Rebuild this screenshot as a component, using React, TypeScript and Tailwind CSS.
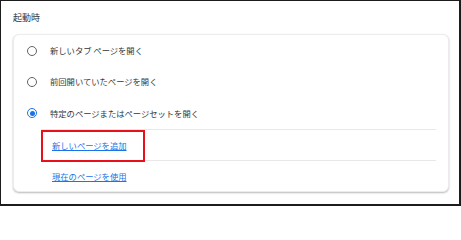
import React from "react";

const font = { fontFamily: '"Noto Sans CJK JP", "Noto Sans", sans-serif' };

function Radio({ checked }: { checked?: boolean }) {
  return checked ? (
    <span className="flex h-[10px] w-[10px] shrink-0 items-center justify-center rounded-full border-[1.6px] border-[#1a73e8]">
      <span className="h-[5px] w-[5px] rounded-full bg-[#1a73e8]" />
    </span>
  ) : (
    <span className="h-[10px] w-[10px] shrink-0 rounded-full border-[1.6px] border-[#5f6368]" />
  );
}

function Row({ label, checked, h }: { label: string; checked?: boolean; h: string }) {
  return (
    <div className={`flex items-center pl-[13px] ${h}`}>
      <Radio checked={checked} />
      <span className="ml-[13px] text-[8.3px] leading-none text-[#333639]">{label}</span>
    </div>
  );
}

export default function App() {
  return (
    <div
      className="h-[206px] w-[461px] border-b-2 border-l border-r-2 border-t border-[#1c1c1c] bg-white"
      style={font}
    >
      <div className="pl-[12px] pt-[12px] text-[9px] leading-[10px] text-[#333639]">起動時</div>
      <div className="ml-[12px] mt-[11px] h-[158px] w-[436px] rounded-[6px] border border-[#ececec] bg-white shadow-[0_1px_2px_rgba(0,0,0,0.28)]">
        <Row label="新しいタブ ページを開く" h="h-[31px]" />
        <Row label="前回開いていたページを開く" h="h-[31px]" />
        <Row label="特定のページまたはページセットを開く" checked h="h-[32px]" />
        <div className="ml-[27px] mr-[12px]">
          <div className="relative flex h-[31px] items-center border-t border-[#e8e8e8] pl-[11px]">
            <a className="text-[8.3px] leading-none text-[#1a73e8] underline underline-offset-1">新しいページを追加</a>
            <div className="absolute left-0 top-0 h-[32px] w-[104px] border-2 border-[#e8101a]" />
          </div>
          <div className="flex h-[31px] items-center border-t border-[#e8e8e8] pl-[11px]">
            <a className="text-[8.3px] leading-none text-[#1a73e8] underline underline-offset-1">現在のページを使用</a>
          </div>
        </div>
      </div>
    </div>
  );
}
